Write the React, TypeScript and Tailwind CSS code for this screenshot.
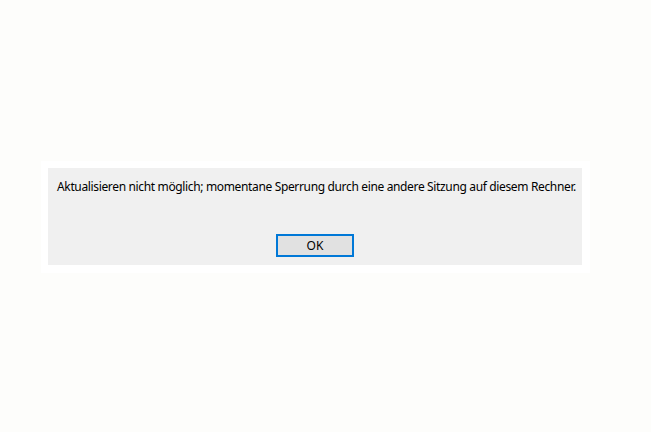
export default function App() {
  return (
    <div className="w-[651px] h-[432px] bg-[#fdfdfb] pt-[161px] pl-[41px] overflow-hidden">
      <div className="w-[549px] bg-white pt-[7px] pl-[7px] pr-[8px] pb-[8px]">
        <div className="h-[97px] bg-[#f0f0f0] flex flex-col pl-[9px] pt-[11px]" style={{ fontFamily: '"Segoe UI", "Noto Sans", sans-serif' }}>
          <p className="text-[12px] leading-[16px] text-black whitespace-nowrap tracking-[-0.35px]">
            Aktualisieren nicht möglich; momentane Sperrung durch eine andere Sitzung auf diesem Rechner.
          </p>
          <div className="flex pl-[219px] pt-[39px]">
            <button className="w-[78px] h-[23px] border-2 border-[#0078d7] bg-[#e1e1e1] text-[12px] text-black flex items-center justify-center">
              OK
            </button>
          </div>
        </div>
      </div>
    </div>
  );
}
